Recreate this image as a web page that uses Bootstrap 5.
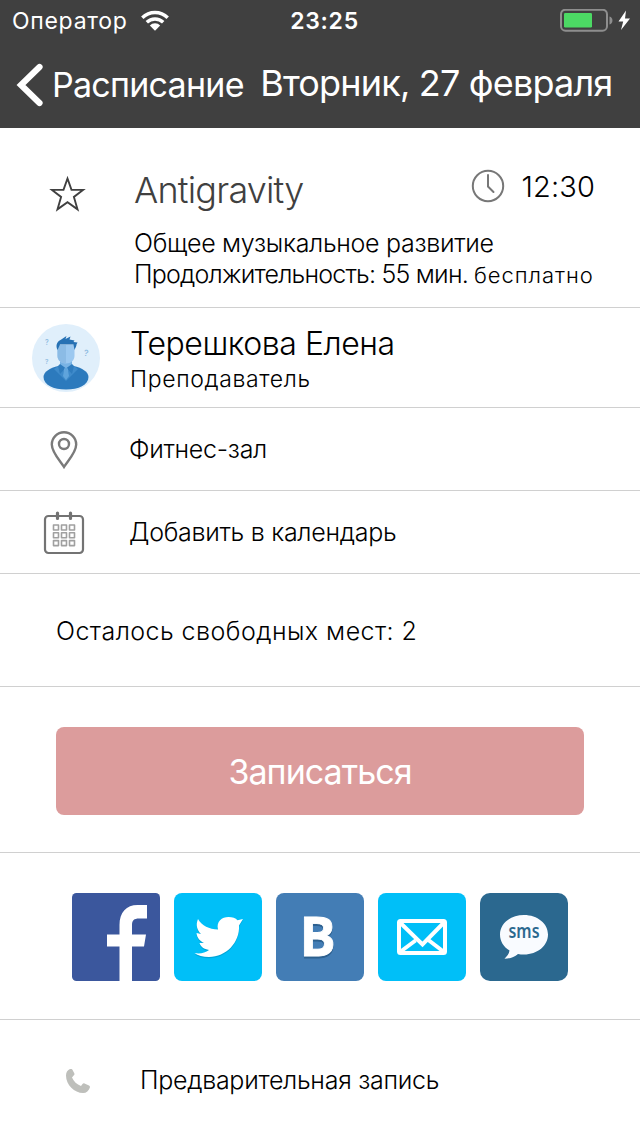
<!DOCTYPE html>
<html lang="ru">
<head>
<meta charset="utf-8">
<meta name="viewport" content="width=device-width, initial-scale=1">
<title>Расписание</title>
<link href="https://cdn.jsdelivr.net/npm/bootstrap@5.3.0/dist/css/bootstrap.min.css" rel="stylesheet">
<style>
body{font-family:Inter,"Liberation Sans",sans-serif;font-weight:300;color:#000;background:#fff;white-space:nowrap;overflow-x:hidden}
svg{display:block;flex:none}
.topbar{height:128px;background:#404040;font-weight:400}
.status-line{height:41px;padding:1px 9px 0 12px;font-size:23px;letter-spacing:.7px}
.status-line>div{flex:1 1 0}
.status-line .wifi{margin-left:12px}
.clock-label{font-weight:600;padding-left:6px}
.nav-line{height:87px;padding-left:16px}
.back-label{font-size:34px;letter-spacing:-.75px;margin-left:8px}
.page-title{font-size:36px;letter-spacing:-.82px;line-height:84px;height:87px;margin-left:16.500px;font-weight:400}
.cell{border-bottom:1px solid #d0d0d0}
.icon-col{flex:none}
.cell-lesson{height:180px;padding:36px 0 0 49px}
.lesson-star{margin-top:10px}
.lesson-body{margin-left:48px;width:461px}
.lesson-name{font-size:36px;letter-spacing:-.8px;color:#404040;line-height:53px}
.lesson-time{font-size:29px;letter-spacing:.1px;line-height:46px;margin-left:17px}
.lesson-clock{margin-top:-2px}
.lesson-info{font-size:25px;letter-spacing:-.3px;line-height:31px;margin-top:11px}
.lesson-length{letter-spacing:-.78px}
.lesson-price{font-size:22px;letter-spacing:.95px;margin-left:6px}
.cell-teacher{height:100px;padding:0 32px}
.teacher-text{margin-left:30px;padding-top:4px}
.teacher-name{font-size:32px;letter-spacing:-.45px;line-height:38px}
.teacher-role{font-size:23px;letter-spacing:.65px;line-height:32px}
.cell-link{height:83px;font-size:25px;letter-spacing:-.28px;padding-top:2px}
.cell-link .icon-col{width:128px}
.cell-link .cell-label{margin-left:1px}
.cell-places{height:113px;padding:3px 0 0 56px;font-size:25px;letter-spacing:.46px}
.cell-action{height:166px;padding:40px 56px 0}
.btn-signup{height:88px;background:#dc9c9c;border-radius:8px;font-size:34px;letter-spacing:-.95px;color:#fff;border:0;padding:0}
.cell-share{height:167px;padding-top:40px;gap:14px}
.cell-phone{height:116px;padding:5px 0 0 65px;font-size:25px;letter-spacing:-.28px}
.cell-phone span{margin-left:49px}
</style>
</head>
<body>
<header class="topbar text-white">
  <div class="status-line d-flex align-items-center">
    <div class="d-flex align-items-center">Оператор
      <svg class="wifi" width="30" height="22" viewBox="0 0 30 22"><g fill="none" stroke="#fff" stroke-width="3.400"><path d="M2.300 7.800a18 18 0 0 1 25.400 0"/><path d="M6.800 12.300a11.700 11.700 0 0 1 16.400 0"/></g><path fill="#fff" d="M9.800 15.500a7.400 7.400 0 0 1 10.400 0L15 20.700z"/></svg>
    </div>
    <span class="clock-label">23:25</span>
    <div class="d-flex align-items-center justify-content-end">
      <svg width="72" height="24" viewBox="0 0 72 24"><rect x="2" y=".7" width="46" height="21" rx="4.500" fill="none" stroke="#8e8e8e" stroke-width="2"/><rect x="5" y="4" width="28" height="14.500" rx="1.200" fill="#4cd964"/><path fill="#8e8e8e" d="M50.500 7.500a4.200 4.200 0 0 1 0 8z"/><path fill="#fff" d="M67 1.500 59.500 12.500h4.700L62 21 71 9.500h-5z"/></svg>
    </div>
  </div>
  <nav class="nav-line d-flex align-items-center">
    <svg width="28" height="44" viewBox="0 0 28 44"><path d="M23.500 4 5 22 23.500 40" fill="none" stroke="#fff" stroke-width="6.200" stroke-linecap="round"/></svg>
    <span class="back-label">Расписание</span>
    <h1 class="page-title mb-0">Вторник, 27 февраля</h1>
  </nav>
</header>
<main>
  <section class="cell cell-lesson d-flex">
    <svg class="icon-col lesson-star" width="37" height="38" viewBox="0 0 37 38"><path d="M18.500 4.500 22.500 15.900H34L24.900 22.900 28.500 35.300 18.500 28.200 8.500 35.300 12.100 22.900 3 15.900H14.500z" fill="none" stroke="#404040" stroke-width="1.900"/></svg>
    <div class="lesson-body">
      <div class="d-flex justify-content-between align-items-start">
        <span class="lesson-name">Antigravity</span>
        <span class="d-flex align-items-center">
          <svg class="lesson-clock" width="34" height="34" viewBox="0 0 34 34" fill="none" stroke="#777" stroke-width="2"><circle cx="17" cy="17" r="15.200"/><path d="M17 6v11.500l5.500 5.500" stroke-linecap="round"/></svg>
          <span class="lesson-time">12:30</span>
        </span>
      </div>
      <div class="lesson-info">Общее музыкальное развитие<br><span class="lesson-length">Продолжительность: 55 мин.</span><span class="lesson-price">бесплатно</span></div>
    </div>
  </section>
  <section class="cell cell-teacher d-flex align-items-center">
    <svg width="68" height="68" viewBox="0 0 68 68">
      <circle cx="34" cy="34" r="34" fill="#e0effb"/>
      <path d="M11.500 53c0-5 6-9 15-11h15c9 2 15 6 15 11 0 8-10 12.500-22.500 12.500S11.500 61 11.500 53z" fill="#2c7abd"/>
      <path d="M26 42h16l4 3-12 12-12-12z" fill="#3f8bcb"/>
      <path d="M28 36h12v6l-6 7-6-7z" fill="#79b3e4"/>
      <path d="m28 40-2 2 2 8 5.500-6zM40 40l2 2-2 8-5.500-6z" fill="#2f7cbe"/>
      <path d="M32.500 44h3l1.500 8-3 4-3-4z" fill="#5fa4dc"/>
      <path d="M25.500 21h17v11c0 4-3.500 7.500-8.500 7.500s-8.500-3.500-8.500-7.500z" fill="#9bc8f0"/>
      <path d="M25.500 21H34v18.500c-5 0-8.500-3.500-8.500-7.500z" fill="#8bbbe5"/>
      <path d="M25.500 26c-2-4-1-8 3-10l6-4-1 3 5-2.500-1 3 5 1-1 1.500 4 .5-1 2c0 2-1 3-2 5.500l-1-5.500H28z" fill="#2671b4"/>
      <g font-family="Inter,sans-serif" font-weight="500" fill="#8bb9df"><text x="13" y="21" font-size="7">?</text><text x="13" y="40" font-size="6.500">?</text><text x="52" y="32" font-size="8.500" transform="rotate(8 54 29)">?</text></g>
    </svg>
    <div class="teacher-text">
      <div class="teacher-name">Терешкова Елена</div>
      <div class="teacher-role">Преподаватель</div>
    </div>
  </section>
  <section class="cell cell-link d-flex align-items-center">
    <span class="icon-col d-flex justify-content-center"><svg width="30" height="40" viewBox="0 0 30 40" fill="none" stroke="#7a7a7a" stroke-width="2.400"><path d="M15 37C12 32 2.800 22.500 2.800 14.500a12.200 12.200 0 0 1 24.400 0C27.200 22.500 18 32 15 37z"/><circle cx="15" cy="14" r="5"/></svg></span>
    <span class="cell-label">Фитнес-зал</span>
  </section>
  <section class="cell cell-link d-flex align-items-center">
    <span class="icon-col d-flex justify-content-center"><svg width="42" height="44" viewBox="0 0 42 44" fill="none" stroke="#737373"><rect x="2" y="5" width="38" height="37" rx="3.500" stroke-width="2.200"/><path d="M14.500 2v5.500M27.500 2v5.500" stroke-width="3.200" stroke-linecap="round"/><g stroke="#a0a0a0" stroke-width="1.600"><path id="day-row" d="M10.500 14h5v5h-5zM18.500 14h5v5h-5zM26.500 14h5v5h-5z" stroke-linejoin="round"/><use href="#day-row" y="7.800"/><use href="#day-row" y="15.600"/></g></svg></span>
    <span class="cell-label">Добавить в календарь</span>
  </section>
  <section class="cell cell-places d-flex align-items-center">Осталось свободных мест: 2</section>
  <section class="cell cell-action"><button type="button" class="btn btn-signup w-100 d-block">Записаться</button></section>
  <section class="cell cell-share d-flex justify-content-center align-items-start">
    <svg width="88" height="88" viewBox="0 0 88 88"><rect width="88" height="88" rx="4.500" fill="#3b579d"/><path fill="#fff" d="M47.500 88V53.500H35v-12h12.500V32c0-13 7-20 18-20h9.500v13.500h-8c-5 0-7 2-7 6.500v9.500h14l-2 12H60V88z"/></svg>
    <svg width="88" height="88" viewBox="0 0 88 88"><rect width="88" height="88" rx="8" fill="#00bff8"/><path fill="#008fbd" opacity=".55" transform="translate(0 1.200)" d="M24 26c4 7 11 10 20 10.500-2-8 4-12.500 10.500-12.500 4 0 7 1 9 3.300L69 26l-4 6.500c1 17-13 31.500-30 31.500-6 0-11-1.500-14.500-4C26 61 31 60 35 57c-5-1-8-3-9.500-7H30c-4-2-7-5-7.500-10l4.500 1c-4-4-5.500-9-3-15z"/><path fill="#fff" d="M24 26c4 7 11 10 20 10.500-2-8 4-12.500 10.500-12.500 4 0 7 1 9 3.300L69 26l-4 6.500c1 17-13 31.500-30 31.500-6 0-11-1.500-14.500-4C26 61 31 60 35 57c-5-1-8-3-9.500-7H30c-4-2-7-5-7.500-10l4.500 1c-4-4-5.500-9-3-15z"/></svg>
    <svg width="88" height="88" viewBox="0 0 88 88"><rect width="88" height="88" rx="8" fill="#437db5"/><g font-family="'Open Sans',sans-serif" font-weight="700" font-size="54" stroke-width=".8"><text x="23.500" y="65" fill="#2d608f" stroke="#2d608f">В</text><text x="23.500" y="63.300" fill="#fff" stroke="#fff">В</text></g></svg>
    <svg width="88" height="88" viewBox="0 0 88 88"><rect width="88" height="88" rx="8" fill="#00bff8"/><g fill="none" stroke="#fff" stroke-width="4"><rect x="21" y="28" width="46" height="32" rx="1.500"/><path d="M22 29.500 44.500 51.500 66 29.500M22 59l15.500-11.500M66 59 51 47.500"/></g></svg>
    <svg width="88" height="88" viewBox="0 0 88 88"><rect width="88" height="88" rx="10" fill="#2b688f"/><path fill="#f9fbff" d="M44 22c13.500 0 24 8.500 24 19.500S57.500 61.500 44 61.500c-2.500 0-4-.3-6-.6-4 3.500-8.500 4.800-13.500 4.800 2.500-2.500 4.500-4.700 5-8.200C23.500 54 20 48 20 41.500 20 30.500 30.500 22 44 22z"/><text x="28.500" y="45" textLength="31" lengthAdjust="spacingAndGlyphs" font-family="'Noto Sans',sans-serif" font-weight="600" font-size="19" fill="#2b688f">sms</text></svg>
  </section>
  <section class="cell-phone d-flex align-items-center">
    <svg width="26" height="26" viewBox="0 0 26 26"><path fill="#bebfbb" d="M4.500 1.300C6 .5 7.300 1 7.700 2.200l1.700 3.300c.3.900-.2 1.700-1 2.200L7 9.400c1.800 4 4.800 6.800 9 8.600l1.500-2c.5-.7 1.300-.9 2-.6l4.500 2.100c.9.400 1.200 1.300.8 2.200-1 3-3.300 5.300-6.700 5.300C9.500 25 1 17 1 7.500 1 4.500 2.500 2.200 4.500 1.300z"/></svg>
    <span>Предварительная запись</span>
  </section>
</main>
<script src="https://cdn.jsdelivr.net/npm/bootstrap@5.3.0/dist/js/bootstrap.bundle.min.js"></script>
</body>
</html>
